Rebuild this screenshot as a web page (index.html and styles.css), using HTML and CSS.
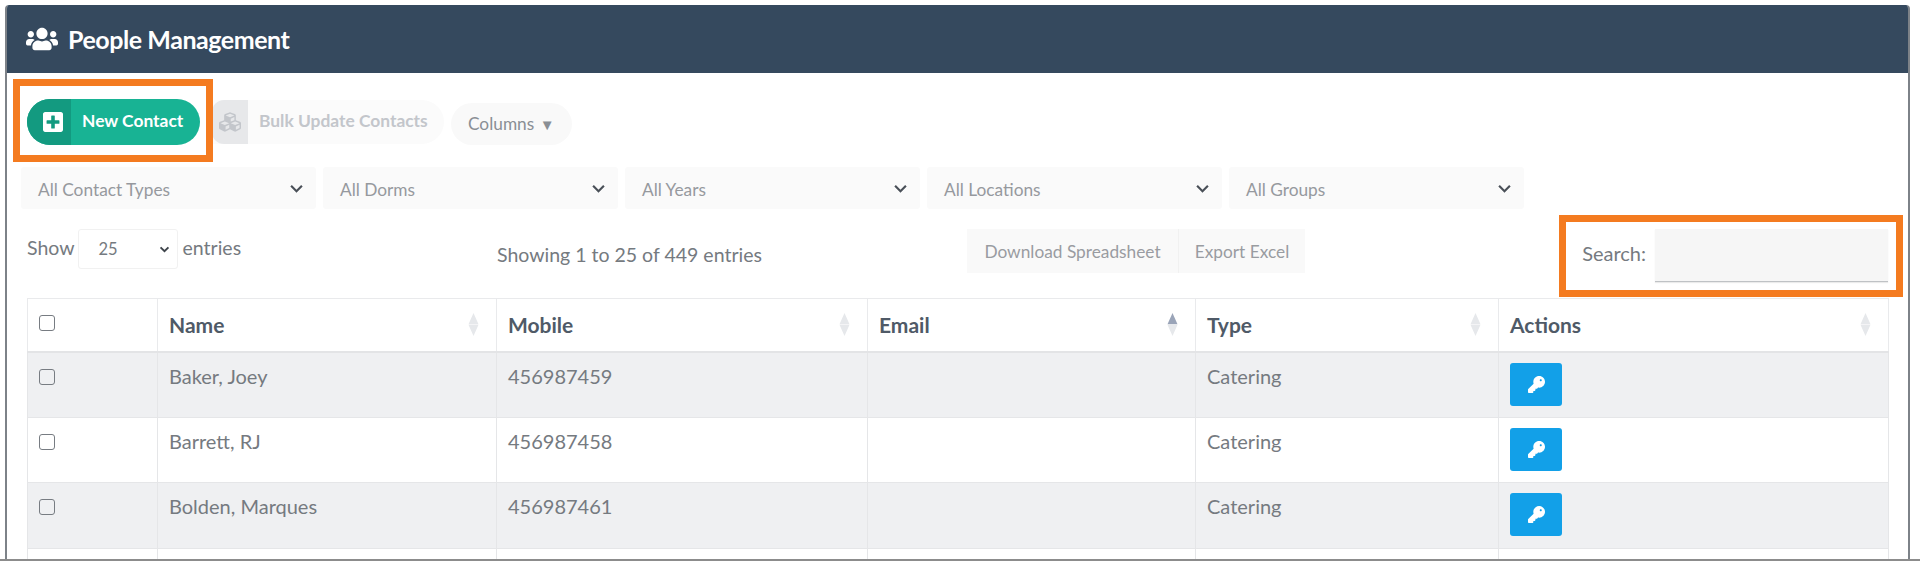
FILE: index.html
```html
<!DOCTYPE html>
<html lang="en">
<head>
<meta charset="utf-8">
<title>People Management</title>
<link rel="stylesheet" href="styles.css">
</head>
<body>
<div class="page">
  <main class="panel">
    <header class="panel-head">
      <svg class="users-icon" viewBox="0 0 640 512"><path d="M96 224c35.300 0 64-28.700 64-64s-28.700-64-64-64-64 28.700-64 64 28.700 64 64 64zm448 0c35.300 0 64-28.700 64-64s-28.700-64-64-64-64 28.700-64 64 28.700 64 64 64zm32 32h-64c-17.600 0-33.500 7.100-45.100 18.600 40.300 22.100 68.900 62 75.100 109.400h66c17.700 0 32-14.300 32-32v-32c0-35.300-28.700-64-64-64zm-256 0c61.900 0 112-50.100 112-112S381.900 32 320 32 208 82.100 208 144s50.100 112 112 112zm76.800 32h-8.300c-20.800 10-43.900 16-68.500 16s-47.600-6-68.500-16h-8.300C179.600 288 128 339.600 128 403.200V432c0 26.500 21.500 48 48 48h288c26.500 0 48-21.500 48-48v-28.800c0-63.600-51.600-115.200-115.200-115.200zm-223.700-13.400C161.500 263.100 145.600 256 128 256H64c-35.300 0-64 28.700-64 64v32c0 17.700 14.300 32 32 32h65.900c6.300-47.400 34.900-87.300 75.200-109.400z"/></svg>
      <h1 class="panel-title">People Management</h1>
    </header>

    <div class="toolbar">
      <button class="btn-new">
        <span class="btn-new-icon"><svg class="plus-icon" viewBox="0 32 448 448"><path d="M400 32H48C21.500 32 0 53.500 0 80v352c0 26.500 21.500 48 48 48h352c26.500 0 48-21.500 48-48V80c0-26.500-21.500-48-48-48zm-32 252c0 6.600-5.400 12-12 12h-92v92c0 6.600-5.400 12-12 12h-56c-6.600 0-12-5.400-12-12v-92H92c-6.600 0-12-5.400-12-12v-56c0-6.600 5.400-12 12-12h92v-92c0-6.600 5.400-12 12-12h56c6.600 0 12 5.400 12 12v92h92c6.600 0 12 5.400 12 12v56z"/></svg></span>
        <span class="btn-new-label">New Contact</span>
      </button>
      <button class="btn-bulk">
        <span class="btn-bulk-icon"><svg class="cubes-icon" viewBox="0 0 512 512"><path d="M488.600 250.200L392 214V105.500c0-15-9.300-28.400-23.400-33.700l-100-37.500c-8.100-3.100-17.100-3.100-25.300 0l-100 37.500c-14.100 5.300-23.400 18.700-23.400 33.700V214l-96.600 36.200C9.300 255.500 0 268.900 0 283.900V394c0 13.600 7.700 26.100 19.900 32.200l100 50c10.100 5.100 22.100 5.100 32.200 0l103.900-52 103.900 52c10.100 5.100 22.100 5.100 32.200 0l100-50c12.200-6.100 19.900-18.600 19.900-32.200V283.900c0-15-9.300-28.400-23.400-33.700zM358 214.800l-85 31.900v-68.200l85-37v73.300zM154 104.100l102-38.200 102 38.200v.6l-102 41.400-102-41.400v-.6zm84 291.100l-85 42.500v-79.100l85-38.800v75.400zm0-112l-102 41.400-102-41.400v-.6l102-38.200 102 38.200v.6zm240 112l-85 42.500v-79.100l85-38.800v75.400zm0-112l-102 41.400-102-41.400v-.6l102-38.200 102 38.200v.6z"/></svg></span>
        <span class="btn-bulk-label">Bulk Update Contacts</span>
      </button>
      <button class="btn-columns">Columns <span class="caret">&#9660;</span></button>
    </div>

    <div class="filters">
      <div class="filter"><span class="filter-label">All Contact Types</span><svg class="chevron" viewBox="0 0 12 8"><path d="M1 1.500l5 5 5-5"/></svg></div>
      <div class="filter"><span class="filter-label">All Dorms</span><svg class="chevron" viewBox="0 0 12 8"><path d="M1 1.500l5 5 5-5"/></svg></div>
      <div class="filter"><span class="filter-label">All Years</span><svg class="chevron" viewBox="0 0 12 8"><path d="M1 1.500l5 5 5-5"/></svg></div>
      <div class="filter"><span class="filter-label">All Locations</span><svg class="chevron" viewBox="0 0 12 8"><path d="M1 1.500l5 5 5-5"/></svg></div>
      <div class="filter"><span class="filter-label">All Groups</span><svg class="chevron" viewBox="0 0 12 8"><path d="M1 1.500l5 5 5-5"/></svg></div>
    </div>

    <div class="table-controls">
      <div class="length">
        <span class="length-text">Show</span>
        <div class="length-select"><span>25</span><svg class="chevron chevron-small" viewBox="0 0 12 8"><path d="M1.500 1.500l4.500 4.500 4.500-4.500"/></svg></div>
        <span class="length-text">entries</span>
      </div>
      <div class="info">Showing 1 to 25 of 449 entries</div>
      <div class="exports">
        <button class="btn-export btn-download">Download Spreadsheet</button>
        <button class="btn-export btn-excel">Export Excel</button>
      </div>
      <label class="search"><span class="search-label">Search:</span><input class="search-input" type="text"></label>
    </div>

    <table class="contacts">
      <colgroup>
        <col class="col-check"><col class="col-name"><col class="col-mobile"><col class="col-email"><col class="col-type"><col class="col-actions">
      </colgroup>
      <thead>
        <tr>
          <th class="check-head"><input class="check check-top" type="checkbox"></th>
          <th><div class="th-in">Name<svg class="sort" viewBox="0 0 11 23"><path d="M5.500 0L10.500 11.200H.5z"/><path d="M5.500 23L.5 11.800H10.500z"/></svg></div></th>
          <th><div class="th-in">Mobile<svg class="sort" viewBox="0 0 11 23"><path d="M5.500 0L10.500 11.200H.5z"/><path d="M5.500 23L.5 11.800H10.500z"/></svg></div></th>
          <th><div class="th-in">Email<svg class="sort" viewBox="0 0 11 23"><path class="sort-active" d="M5.500 0L10.500 11.200H.5z"/><path d="M5.500 23L.5 11.800H10.500z"/></svg></div></th>
          <th><div class="th-in">Type<svg class="sort" viewBox="0 0 11 23"><path d="M5.500 0L10.500 11.200H.5z"/><path d="M5.500 23L.5 11.800H10.500z"/></svg></div></th>
          <th><div class="th-in">Actions<svg class="sort" viewBox="0 0 11 23"><path d="M5.500 0L10.500 11.200H.5z"/><path d="M5.500 23L.5 11.800H10.500z"/></svg></div></th>
        </tr>
      </thead>
      <tbody>
        <tr class="row-a">
          <td><input class="check" type="checkbox"></td><td>Baker, Joey</td><td>456987459</td><td></td><td>Catering</td>
          <td><button class="btn-key"><svg class="key-icon" viewBox="0 0 512 512"><path d="M512 176.001C512 273.203 433.202 352 336 352c-11.220 0-22.190-1.062-32.827-3.069l-24.012 27.014A23.999 23.999 0 0 1 261.223 384H224v40c0 13.255-10.745 24-24 24h-40v40c0 13.255-10.745 24-24 24H24c-13.255 0-24-10.745-24-24v-78.059c0-6.365 2.529-12.470 7.029-16.971l161.802-161.802C163.108 213.814 160 195.271 160 176 160 78.798 238.797.001 335.999 0 433.488-.001 512 78.511 512 176.001zM354 128c0 16.600 13.400 30 30 30s30-13.400 30-30-13.400-30-30-30-30 13.400-30 30z"/></svg></button></td>
        </tr>
        <tr class="row-b">
          <td><input class="check" type="checkbox"></td><td>Barrett, RJ</td><td>456987458</td><td></td><td>Catering</td>
          <td><button class="btn-key"><svg class="key-icon" viewBox="0 0 512 512"><path d="M512 176.001C512 273.203 433.202 352 336 352c-11.220 0-22.190-1.062-32.827-3.069l-24.012 27.014A23.999 23.999 0 0 1 261.223 384H224v40c0 13.255-10.745 24-24 24h-40v40c0 13.255-10.745 24-24 24H24c-13.255 0-24-10.745-24-24v-78.059c0-6.365 2.529-12.470 7.029-16.971l161.802-161.802C163.108 213.814 160 195.271 160 176 160 78.798 238.797.001 335.999 0 433.488-.001 512 78.511 512 176.001zM354 128c0 16.600 13.400 30 30 30s30-13.400 30-30-13.400-30-30-30-30 13.400-30 30z"/></svg></button></td>
        </tr>
        <tr class="row-a">
          <td><input class="check" type="checkbox"></td><td>Bolden, Marques</td><td>456987461</td><td></td><td>Catering</td>
          <td><button class="btn-key"><svg class="key-icon" viewBox="0 0 512 512"><path d="M512 176.001C512 273.203 433.202 352 336 352c-11.220 0-22.190-1.062-32.827-3.069l-24.012 27.014A23.999 23.999 0 0 1 261.223 384H224v40c0 13.255-10.745 24-24 24h-40v40c0 13.255-10.745 24-24 24H24c-13.255 0-24-10.745-24-24v-78.059c0-6.365 2.529-12.470 7.029-16.971l161.802-161.802C163.108 213.814 160 195.271 160 176 160 78.798 238.797.001 335.999 0 433.488-.001 512 78.511 512 176.001zM354 128c0 16.600 13.400 30 30 30s30-13.400 30-30-13.400-30-30-30-30 13.400-30 30z"/></svg></button></td>
        </tr>
        <tr class="row-b row-cut"><td></td><td></td><td></td><td></td><td></td><td></td></tr>
      </tbody>
    </table>

    <div class="callout callout-new"></div>
    <div class="callout callout-search"></div>
  </main>
</div>
</body>
</html>
```

FILE: styles.css
```css
* { box-sizing: border-box; }
html, body { margin: 0; height: 571px; background: #fff; overflow: hidden; }
body { font-family: Lato, "Liberation Sans", sans-serif; color: #757a80; }
button { font-family: inherit; border: 0; padding: 0; cursor: pointer; }

.page {
  height: 561px;
  padding: 5px 10px 0 5px;
  border-bottom: 2px solid #8c8c8c;
  overflow: hidden;
}
.panel {
  position: relative;
  width: 1905px;
  height: 560px;
  border-left: 2px solid #7d8288;
  border-right: 2px solid #7d8288;
  border-radius: 4px 4px 0 0;
  overflow: hidden;
}

.panel-head {
  height: 68px;
  margin-left: -2px;
  margin-right: -2px;
  padding-left: 21px;
  background: #35495e;
  display: flex;
  align-items: center;
  gap: 10px;
}
.users-icon { width: 32px; height: 26px; fill: #fff; }
.panel-title { margin: 0; font-size: 25px; font-weight: 700; color: #fff; letter-spacing: -0.45px; }

.toolbar { display: flex; align-items: center; margin: 26px 0 0 20px; height: 46px; }
.btn-new {
  width: 173px; height: 46px; border-radius: 23px; background: #18b394; color: #fff;
  display: flex; align-items: stretch; overflow: hidden;
}
.btn-new-icon { width: 44px; background: #139a80; display: flex; align-items: center; justify-content: center; padding-left: 8px; }
.plus-icon { width: 20px; height: 20px; fill: #fff; }
.btn-new-label { padding-left: 11px; font-size: 17.400px; font-weight: 700; line-height: 44px; }
.btn-bulk {
  width: 232px; height: 44px; margin-left: 12px; border-radius: 0 22px 22px 0; background: #fbfbfb; color: #c3c6cb;
  display: flex; align-items: stretch; overflow: hidden;
}
.btn-bulk-icon { width: 36px; background: #e7e8ea; border-radius: 12px 0 0 12px; display: flex; align-items: center; justify-content: center; }
.cubes-icon { width: 22px; height: 22px; fill: #c3c6cb; }
.btn-bulk-label { padding-left: 11px; font-size: 17.400px; font-weight: 700; line-height: 42px; }
.btn-columns {
  width: 121px; height: 42px; margin-left: 7px; margin-top: 3px; padding-left: 17px; border-radius: 21px; background: #f9f9f9;
  color: #8a8f95; font-size: 17.300px; text-align: left;
}
.caret { font-size: 15px; margin-left: 1px; vertical-align: 0; }

.filters { display: flex; gap: 7px; margin: 22px 0 0 14px; }
.filter {
  width: 295px; height: 42px; padding: 0 13px 0 17px; border-radius: 3px; background: #fafafa;
  display: flex; align-items: center; justify-content: space-between;
  font-size: 17.300px; color: #96999e;
}
.filter-label { margin-top: 2px; }
.chevron { width: 13px; height: 9px; fill: none; stroke: #4a5058; stroke-width: 2; }
.chevron-small { width: 11px; height: 7px; stroke-width: 2.200; stroke: #3e444b; }

.table-controls {
  display: grid; grid-template-columns: 470px 470px 1fr auto; align-items: center;
  margin: 20px 20px 0 20px; height: 54px;
}
.length { display: flex; align-items: center; gap: 3px; font-size: 19.500px; margin-top: -14px; }
.length-text { margin-top: -3px; }
.length-text + .length-select + .length-text { margin-left: 2px; }
.length-select {
  width: 100px; height: 40px; padding: 0 7px 0 20px; border: 1px solid #f1f1f1; border-radius: 3px; background: #fff;
  display: flex; align-items: center; justify-content: space-between; font-size: 16.500px;
}
.info { font-size: 19.500px; margin-top: -3px; }
.exports { display: flex; height: 44px; margin-top: -10px; }
.btn-export { height: 44px; background: #f9f9f9; color: #999ca1; font-size: 17.300px; }
.btn-download { width: 211px; }
.btn-excel { width: 127px; border-left: 1px solid #f1f1f1; }
.search { display: flex; align-items: center; gap: 9px; font-size: 20px; margin-top: -2px; }
.search-label { margin-top: -5px; }
.search-input {
  width: 233px; height: 53px; border: 0; border-bottom: 1px solid #bfc2c5; background: #f6f6f6; padding: 0 10px;
  box-shadow: 0 1px 1px rgba(0,0,0,.08); outline: 0;
}

.contacts {
  width: 1861px; margin: 15px 0 0 20px; border-collapse: collapse; table-layout: fixed; font-size: 20px;
}
.col-check { width: 130px; }
.col-name { width: 339px; }
.col-mobile { width: 371px; }
.col-email { width: 328px; }
.col-type { width: 303px; }
.col-actions { width: 390px; }
.contacts thead tr { height: 53px; }
.contacts th {
  height: 53px; padding: 0 11px; border: 1px solid #e9eaec; border-bottom: 2px solid #e3e4e6; text-align: left;
  font-size: 21px; font-weight: 700; color: #4f5a67;
}
.th-in { display: flex; align-items: center; justify-content: space-between; }
.sort { width: 11px; height: 23px; margin-right: 6px; fill: #e6e8eb; }
.sort .sort-active { fill: #9aa4b8; }
.contacts td {
  padding: 11px 11px 0; border-left: 1px solid #e5e6e8; border-right: 1px solid #e5e6e8; vertical-align: top; line-height: 24px;
}
.row-a td { background: #eff0f2; }
.row-b td { background: #fff; }
.contacts tbody .row-a { height: 66px; }
.contacts tbody .row-b { height: 65px; }
.contacts tbody .row-cut { height: 30px; }
.contacts tbody tr + tr td { border-top: 1px solid #e5e6e8; }
.check {
  appearance: none; -webkit-appearance: none; display: block; margin: 5px 0 0 0; width: 16px; height: 16px;
  border: 1.500px solid #777c82; border-radius: 3px; background: transparent;
}
.check-top { margin: -3px 0 0 0; }
.btn-key {
  width: 52px; height: 43px; margin-top: -1px; background: #12a0e8; border-radius: 3px;
  display: flex; align-items: center; justify-content: center;
}
.key-icon { width: 17px; height: 17px; fill: #fff; }

.callout { position: absolute; border: 7px solid #f47b20; }
.callout-new { left: 6px; top: 74px; width: 200px; height: 83px; }
.callout-search { left: 1552px; top: 210px; width: 344px; height: 82px; }
```
